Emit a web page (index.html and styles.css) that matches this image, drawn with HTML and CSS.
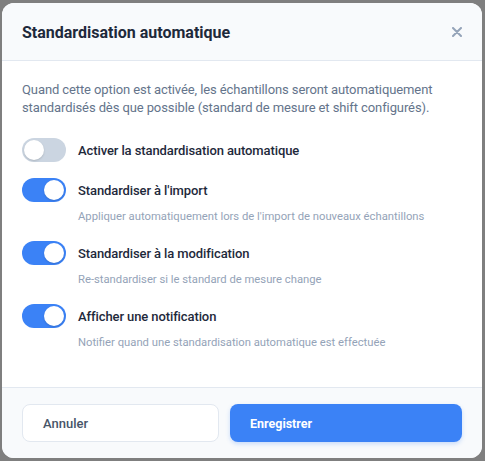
FILE: index.html
```html
<!DOCTYPE html>
<html lang="fr">
<head>
<meta charset="utf-8">
<link rel="stylesheet" href="styles.css">
</head>
<body>
<div class="modal">
  <div class="header">
    <h2 class="title">Standardisation automatique</h2>
    <button class="close" aria-label="Fermer">
      <svg width="10" height="10" viewBox="0 0 10 10"><path d="M1 1L9 9M9 1L1 9" stroke="#94a3b8" stroke-width="2" stroke-linecap="round"/></svg>
    </button>
  </div>
  <div class="body">
    <p class="desc">Quand cette option est activée, les échantillons seront automatiquement standardisés dès que possible (standard de mesure et shift configurés).</p>
    <div class="options">
      <div class="option">
        <div class="row"><span class="toggle"></span><span class="label">Activer la standardisation automatique</span></div>
      </div>
      <div class="option">
        <div class="row"><span class="toggle on"></span><span class="label">Standardiser à l'import</span></div>
        <div class="sub">Appliquer automatiquement lors de l'import de nouveaux échantillons</div>
      </div>
      <div class="option">
        <div class="row"><span class="toggle on"></span><span class="label">Standardiser à la modification</span></div>
        <div class="sub">Re-standardiser si le standard de mesure change</div>
      </div>
      <div class="option">
        <div class="row"><span class="toggle on"></span><span class="label">Afficher une notification</span></div>
        <div class="sub">Notifier quand une standardisation automatique est effectuée</div>
      </div>
    </div>
  </div>
  <div class="footer">
    <button class="btn cancel">Annuler</button>
    <button class="btn save">Enregistrer</button>
  </div>
</div>
</body>
</html>
```
FILE: styles.css
```css
* { box-sizing: border-box; }
html, body { margin: 0; height: 100%; }
body {
  background: #7f7f7f;
  font-family: Roboto, "Noto Sans", sans-serif;
  padding: 3px 3px 0 2px;
  overflow: hidden;
}
.modal {
  width: 480px;
  height: 455px;
  background: #fff;
  border-radius: 12px;
  overflow: hidden;
  display: flex;
  flex-direction: column;
}
.header {
  height: 58px;
  background: #f8fafc;
  border-bottom: 1px solid #e2e8f0;
  display: flex;
  align-items: center;
  justify-content: space-between;
  padding: 1px 20px 0 20px;
}
.title {
  margin: 0;
  font-size: 16px;
  font-weight: 700;
  color: #1e293b;
}
.close {
  background: none;
  border: 0;
  padding: 0;
  width: 10px;
  height: 10px;
  display: flex;
}
.body {
  flex: 1;
  padding: 20px 20px 0 20px;
}
.desc {
  margin: 0;
  font-size: 13px;
  line-height: 18px;
  letter-spacing: -0.1px;
  color: #64748b;
}
.options {
  margin-top: 21px;
  display: flex;
  flex-direction: column;
  gap: 16px;
}
.row {
  display: flex;
  align-items: center;
  gap: 12px;
  height: 24px;
}
.toggle {
  width: 44px;
  height: 24px;
  border-radius: 12px;
  background: #cbd5e1;
  position: relative;
  flex: none;
}
.toggle::after {
  content: "";
  position: absolute;
  top: 2px;
  left: 2px;
  width: 20px;
  height: 20px;
  border-radius: 50%;
  background: #fff;
  box-shadow: 0 1px 2px rgba(0,0,0,0.15);
}
.toggle.on { background: #3b82f6; }
.toggle.on::after { left: 22px; }
.label {
  font-size: 13px;
  font-weight: 500;
  letter-spacing: -0.1px;
  color: #1e293b;
}
.sub {
  margin-top: 6px;
  padding-left: 56px;
  font-size: 11.25px;
  line-height: 17px;
  color: #94a3b8;
}
.footer {
  height: 71px;
  background: #f8fafc;
  border-top: 1px solid #e2e8f0;
  display: flex;
  gap: 11px;
  padding: 16px 20px 0 20px;
}
.btn {
  height: 38px;
  border-radius: 8px;
  font-family: inherit;
  text-align: left;
  padding: 0 20px;
}
.cancel {
  width: 197px;
  background: #fff;
  border: 1px solid #e2e8f0;
  color: #475569;
  font-size: 13px;
  font-weight: 500;
}
.save {
  flex: 1;
  background: #3b82f6;
  border: 0;
  color: #fff;
  font-size: 12.5px;
  font-weight: 700;
  box-shadow: 0 2px 4px rgba(59,130,246,0.25);
}
```
